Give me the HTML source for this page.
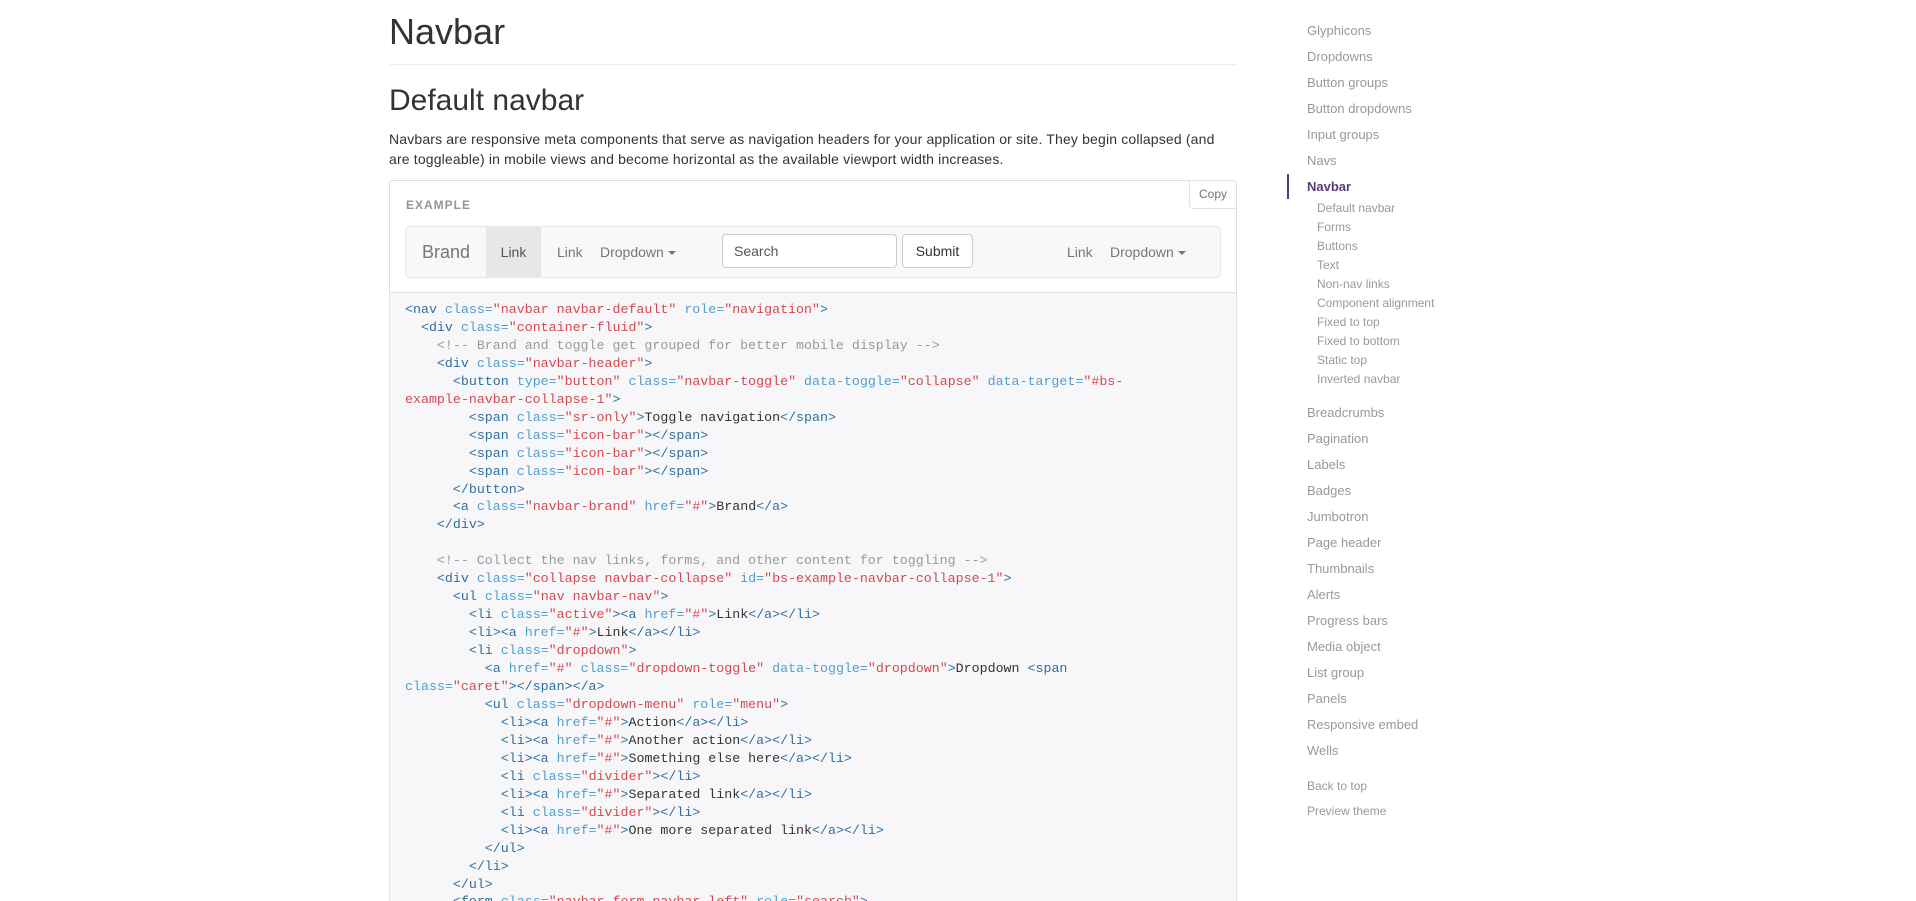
<!DOCTYPE html>
<html><head><meta charset="utf-8">
<style>
*{box-sizing:border-box;margin:0;padding:0}
html,body{width:1916px;height:901px;overflow:hidden;background:#fff;font-family:"Liberation Sans",sans-serif;color:#333}
.abs{position:absolute}
h1{position:absolute;left:389px;top:12px;font-size:36px;font-weight:500;line-height:1.1;color:#333}
.hr{position:absolute;left:389px;top:64px;width:848px;height:1px;background:#eee}
h2{position:absolute;left:389px;top:84px;font-size:30px;font-weight:500;line-height:1.1;color:#333}
p.lead{position:absolute;left:389px;top:129px;width:835px;font-size:14px;line-height:20px;letter-spacing:0.16px}
.ex{position:absolute;left:389px;top:180px;width:848px;height:113px;border:1px solid #ddd;border-bottom:none;border-radius:4px 4px 0 0}
.exl{position:absolute;left:16px;top:17px;font-size:12px;font-weight:bold;color:#959595;letter-spacing:1px}
.copy{position:absolute;right:-1px;top:-1px;width:48px;height:29px;border:1px solid #e1e1e8;border-radius:0 4px 0 4px;background:#fff;font-size:12px;color:#767676;text-align:center;line-height:27px}
.nb{position:absolute;left:15px;top:45px;width:816px;height:52px;background:#f8f8f8;border:1px solid #e7e7e7;border-radius:4px}
.nb span{position:absolute;top:0;line-height:50px;font-size:14px;color:#777}
.caret{display:inline-block;width:0;height:0;border-top:4px solid #777;border-left:4px solid transparent;border-right:4px solid transparent;vertical-align:middle;margin-left:4px}
.inp{position:absolute;left:316px;top:7px;width:175px;height:34px;border:1px solid #ccc;border-radius:4px;background:#fff;font-size:14px;color:#555;line-height:32px;padding-left:11px}
.btn{position:absolute;left:496px;top:7px;width:71px;height:34px;border:1px solid #ccc;border-radius:4px;background:#fff;font-size:14px;color:#333;line-height:32px;text-align:center}
.code{position:absolute;left:389px;top:292px;width:848px;height:609px;overflow:hidden;background:#f7f7f9;border:1px solid #e1e1e8;border-bottom:none}
pre{position:absolute;left:15px;top:8px;font-family:"Liberation Mono",monospace;font-size:13.3px;line-height:17.95px;color:#333}
.t{color:#2f6f9f}.a{color:#4f9fcf}.s{color:#d44950}.c{color:#999}
.side{position:absolute;left:1307px;font-size:13px;color:#999}
.sub{position:absolute;left:1317px;font-size:12px;color:#999}
</style></head><body>
<h1>Navbar</h1>
<div class="hr"></div>
<h2>Default navbar</h2>
<p class="lead">Navbars are responsive meta components that serve as navigation headers for your application or site. They begin collapsed (and<br>are toggleable) in mobile views and become horizontal as the available viewport width increases.</p>
<div class="ex">
<div class="exl">EXAMPLE</div>
<div class="copy">Copy</div>
<div class="nb">
<span style="left:16px;font-size:18px">Brand</span>
<span style="left:80px;width:55px;background:#e7e7e7;color:#555;text-align:center">Link</span>
<span style="left:151px">Link</span>
<span style="left:194px">Dropdown<i class="caret"></i></span>
<div class="inp">Search</div>
<div class="btn">Submit</div>
<span style="left:661px">Link</span>
<span style="left:704px">Dropdown<i class="caret"></i></span>
</div>
</div>
<div class="code"><pre><span class="t">&lt;nav</span> <span class="a">class=</span><span class="s">"navbar navbar-default"</span> <span class="a">role=</span><span class="s">"navigation"</span><span class="t">&gt;</span>
  <span class="t">&lt;div</span> <span class="a">class=</span><span class="s">"container-fluid"</span><span class="t">&gt;</span>
    <span class="c">&lt;!-- Brand and toggle get grouped for better mobile display --&gt;</span>
    <span class="t">&lt;div</span> <span class="a">class=</span><span class="s">"navbar-header"</span><span class="t">&gt;</span>
      <span class="t">&lt;button</span> <span class="a">type=</span><span class="s">"button"</span> <span class="a">class=</span><span class="s">"navbar-toggle"</span> <span class="a">data-toggle=</span><span class="s">"collapse"</span> <span class="a">data-target=</span><span class="s">"#bs-
example-navbar-collapse-1"</span><span class="t">&gt;</span>
        <span class="t">&lt;span</span> <span class="a">class=</span><span class="s">"sr-only"</span><span class="t">&gt;</span>Toggle navigation<span class="t">&lt;/span&gt;</span>
        <span class="t">&lt;span</span> <span class="a">class=</span><span class="s">"icon-bar"</span><span class="t">&gt;&lt;/span&gt;</span>
        <span class="t">&lt;span</span> <span class="a">class=</span><span class="s">"icon-bar"</span><span class="t">&gt;&lt;/span&gt;</span>
        <span class="t">&lt;span</span> <span class="a">class=</span><span class="s">"icon-bar"</span><span class="t">&gt;&lt;/span&gt;</span>
      <span class="t">&lt;/button&gt;</span>
      <span class="t">&lt;a</span> <span class="a">class=</span><span class="s">"navbar-brand"</span> <span class="a">href=</span><span class="s">"#"</span><span class="t">&gt;</span>Brand<span class="t">&lt;/a&gt;</span>
    <span class="t">&lt;/div&gt;</span>

    <span class="c">&lt;!-- Collect the nav links, forms, and other content for toggling --&gt;</span>
    <span class="t">&lt;div</span> <span class="a">class=</span><span class="s">"collapse navbar-collapse"</span> <span class="a">id=</span><span class="s">"bs-example-navbar-collapse-1"</span><span class="t">&gt;</span>
      <span class="t">&lt;ul</span> <span class="a">class=</span><span class="s">"nav navbar-nav"</span><span class="t">&gt;</span>
        <span class="t">&lt;li</span> <span class="a">class=</span><span class="s">"active"</span><span class="t">&gt;&lt;a</span> <span class="a">href=</span><span class="s">"#"</span><span class="t">&gt;</span>Link<span class="t">&lt;/a&gt;&lt;/li&gt;</span>
        <span class="t">&lt;li&gt;&lt;a</span> <span class="a">href=</span><span class="s">"#"</span><span class="t">&gt;</span>Link<span class="t">&lt;/a&gt;&lt;/li&gt;</span>
        <span class="t">&lt;li</span> <span class="a">class=</span><span class="s">"dropdown"</span><span class="t">&gt;</span>
          <span class="t">&lt;a</span> <span class="a">href=</span><span class="s">"#"</span> <span class="a">class=</span><span class="s">"dropdown-toggle"</span> <span class="a">data-toggle=</span><span class="s">"dropdown"</span><span class="t">&gt;</span>Dropdown <span class="t">&lt;span</span>
<span class="a">class=</span><span class="s">"caret"</span><span class="t">&gt;&lt;/span&gt;&lt;/a&gt;</span>
          <span class="t">&lt;ul</span> <span class="a">class=</span><span class="s">"dropdown-menu"</span> <span class="a">role=</span><span class="s">"menu"</span><span class="t">&gt;</span>
            <span class="t">&lt;li&gt;&lt;a</span> <span class="a">href=</span><span class="s">"#"</span><span class="t">&gt;</span>Action<span class="t">&lt;/a&gt;&lt;/li&gt;</span>
            <span class="t">&lt;li&gt;&lt;a</span> <span class="a">href=</span><span class="s">"#"</span><span class="t">&gt;</span>Another action<span class="t">&lt;/a&gt;&lt;/li&gt;</span>
            <span class="t">&lt;li&gt;&lt;a</span> <span class="a">href=</span><span class="s">"#"</span><span class="t">&gt;</span>Something else here<span class="t">&lt;/a&gt;&lt;/li&gt;</span>
            <span class="t">&lt;li</span> <span class="a">class=</span><span class="s">"divider"</span><span class="t">&gt;&lt;/li&gt;</span>
            <span class="t">&lt;li&gt;&lt;a</span> <span class="a">href=</span><span class="s">"#"</span><span class="t">&gt;</span>Separated link<span class="t">&lt;/a&gt;&lt;/li&gt;</span>
            <span class="t">&lt;li</span> <span class="a">class=</span><span class="s">"divider"</span><span class="t">&gt;&lt;/li&gt;</span>
            <span class="t">&lt;li&gt;&lt;a</span> <span class="a">href=</span><span class="s">"#"</span><span class="t">&gt;</span>One more separated link<span class="t">&lt;/a&gt;&lt;/li&gt;</span>
          <span class="t">&lt;/ul&gt;</span>
        <span class="t">&lt;/li&gt;</span>
      <span class="t">&lt;/ul&gt;</span>
      <span class="t">&lt;form</span> <span class="a">class=</span><span class="s">"navbar-form navbar-left"</span> <span class="a">role=</span><span class="s">"search"</span><span class="t">&gt;</span></pre></div>

<div class="side" style="top:23px">Glyphicons</div>
<div class="side" style="top:49px">Dropdowns</div>
<div class="side" style="top:75px">Button groups</div>
<div class="side" style="top:101px">Button dropdowns</div>
<div class="side" style="top:127px">Input groups</div>
<div class="side" style="top:153px">Navs</div>
<div class="abs" style="left:1287px;top:174px;width:2px;height:25px;background:#563d7c"></div>
<div class="side" style="top:179px;color:#563d7c;font-weight:bold">Navbar</div>
<div class="sub" style="top:201px">Default navbar</div>
<div class="sub" style="top:220px">Forms</div>
<div class="sub" style="top:239px">Buttons</div>
<div class="sub" style="top:258px">Text</div>
<div class="sub" style="top:277px">Non-nav links</div>
<div class="sub" style="top:296px">Component alignment</div>
<div class="sub" style="top:315px">Fixed to top</div>
<div class="sub" style="top:334px">Fixed to bottom</div>
<div class="sub" style="top:353px">Static top</div>
<div class="sub" style="top:372px">Inverted navbar</div>
<div class="side" style="top:405px">Breadcrumbs</div>
<div class="side" style="top:431px">Pagination</div>
<div class="side" style="top:457px">Labels</div>
<div class="side" style="top:483px">Badges</div>
<div class="side" style="top:509px">Jumbotron</div>
<div class="side" style="top:535px">Page header</div>
<div class="side" style="top:561px">Thumbnails</div>
<div class="side" style="top:587px">Alerts</div>
<div class="side" style="top:613px">Progress bars</div>
<div class="side" style="top:639px">Media object</div>
<div class="side" style="top:665px">List group</div>
<div class="side" style="top:691px">Panels</div>
<div class="side" style="top:717px">Responsive embed</div>
<div class="side" style="top:743px">Wells</div>
<div class="sub" style="left:1307px;top:779px">Back to top</div>
<div class="sub" style="left:1307px;top:804px">Preview theme</div>
</body></html>
